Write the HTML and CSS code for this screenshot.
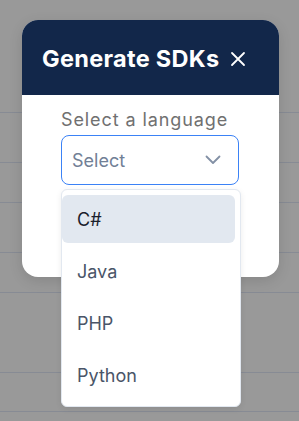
FILE: index.html
```html
<!DOCTYPE html>
<html lang="en">
<head>
  <meta charset="UTF-8">
  <meta name="viewport" content="width=device-width, initial-scale=1.0">
  <title>Generate SDKs</title>
  <link rel="stylesheet" href="styles.css">
</head>
<body>
  <div class="table">
    <div class="row" style="height: 113px"></div>
    <div class="row" style="height: 50px"></div>
    <div class="row" style="height: 40px"></div>
    <div class="row" style="height: 50px"></div>
    <div class="row" style="height: 40px"></div>
    <div class="row" style="height: 80px"></div>
    <div class="row" style="height: 39px"></div>
  </div>

  <div class="modal">
    <div class="modal-header">
      <h2>Generate SDKs</h2>
      <button class="close" aria-label="Close">
        <svg width="16" height="16" viewBox="0 0 16 16" fill="none" stroke="#fff" stroke-width="1.8" stroke-linecap="round">
          <path d="M2 2 L14 14 M14 2 L2 14"/>
        </svg>
      </button>
    </div>
    <div class="modal-body">
      <label class="field-label">Select a language</label>
      <div class="field">
        <div class="select">
          <span>Select</span>
          <svg width="16" height="10" viewBox="0 0 16 10" fill="none" stroke="#8390a5" stroke-width="1.8" stroke-linecap="round" stroke-linejoin="round">
            <path d="M1.5 1.5 L8 8 L14.5 1.5"/>
          </svg>
        </div>
        <ul class="options">
          <li class="option active">C#</li>
          <li class="option">Java</li>
          <li class="option">PHP</li>
          <li class="option">Python</li>
        </ul>
      </div>
    </div>
  </div>
</body>
</html>
```

FILE: styles.css
```css
* {
  margin: 0;
  padding: 0;
  box-sizing: border-box;
}

body {
  background-color: #999999;
  font-family: 'Inter', 'Liberation Sans', sans-serif;
  width: 299px;
  height: 421px;
  overflow: hidden;
  position: relative;
}

.row {
  border-bottom: 1px solid #878b94;
}

.modal {
  position: absolute;
  left: 22px;
  top: 20px;
  width: 257px;
  height: 257px;
  background-color: #fff;
  border-radius: 16px;
  box-shadow: 0 4px 14px rgba(0, 0, 0, 0.12);
}

.modal-header {
  height: 75px;
  background-color: #12274a;
  border-radius: 16px 16px 0 0;
  display: flex;
  align-items: center;
  padding: 0 20px;
  gap: 11px;
}

.modal-header h2 {
  color: #fff;
  font-size: 23.5px;
  font-weight: 700;
  letter-spacing: 0.3px;
  padding-top: 2px;
  white-space: nowrap;
}

.close {
  background: none;
  border: none;
  display: flex;
  padding-top: 3px;
}

.modal-body {
  padding: 14px 0 0 39px;
}

.field-label {
  display: block;
  color: #707070;
  font-size: 18px;
  letter-spacing: 0.9px;
  line-height: 22px;
  margin-bottom: 4px;
  white-space: nowrap;
}

.field {
  position: relative;
  width: 178px;
}

.select {
  height: 50px;
  border: 1px solid #3b82f6;
  border-radius: 8px;
  display: flex;
  align-items: center;
  justify-content: space-between;
  padding: 0 17px 0 10px;
  color: #718096;
  font-size: 18px;
}

.options {
  position: absolute;
  top: 54px;
  left: 0;
  width: 180px;
  list-style: none;
  background-color: #fff;
  border: 1px solid #e2e8f0;
  border-radius: 6px;
  padding: 5px 5px 7px 0;
  display: flex;
  flex-direction: column;
  gap: 4px;
  box-shadow: 0 2px 6px rgba(0, 0, 0, 0.08);
}

.option {
  height: 48px;
  display: flex;
  align-items: center;
  padding-left: 15px;
  font-size: 18px;
  color: #4a5568;
  border-radius: 6px;
}

.option.active {
  background-color: #e2e8f0;
  color: #1a202c;
}
```
